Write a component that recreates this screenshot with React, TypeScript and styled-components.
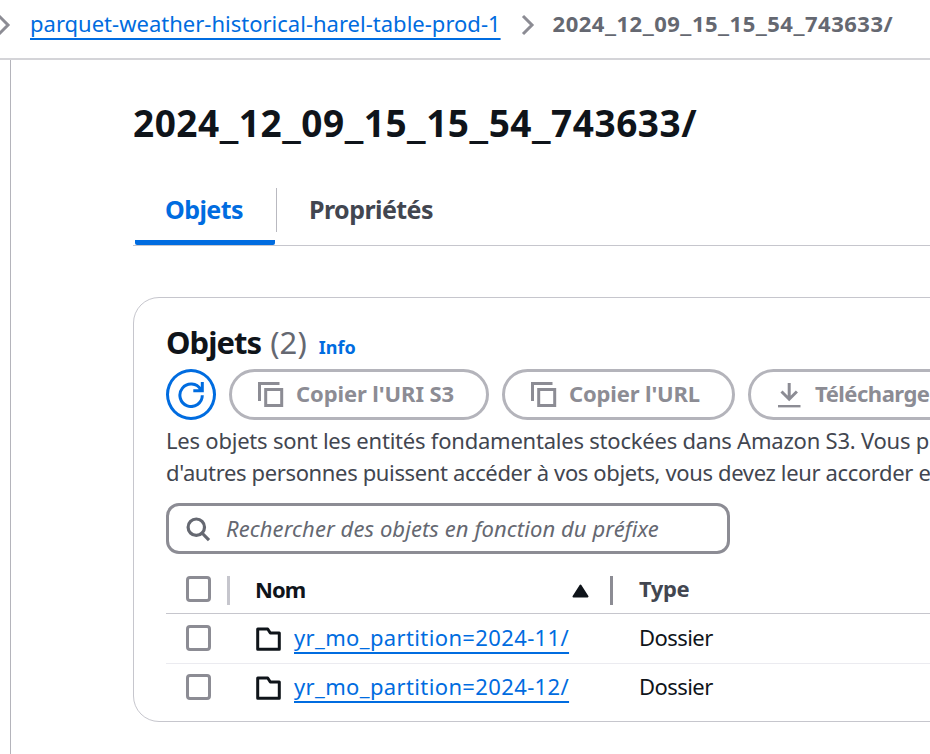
import React from 'react';
import styled, { createGlobalStyle, css } from 'styled-components';

const GlobalStyle = createGlobalStyle`
  *, *::before, *::after { box-sizing: border-box; }
  html, body { margin: 0; height: 100%; overflow: hidden; background: #fff; }
  body {
    font-family: "Noto Sans", "Open Sans", sans-serif;
    font-size: 22px;
    line-height: 32px;
    color: #0f141a;
  }
`;

const Page = styled.div`
  width: 100vw;
  height: 100vh;
  overflow: hidden;
  display: flex;
  flex-direction: column;
  white-space: nowrap;
`;

const Breadcrumbs = styled.nav`
  flex: none;
  height: 60px;
  padding-bottom: 13px;
  border-bottom: 2px solid #d4d4d8;
  display: flex;
  align-items: center;
`;

const Chevron = styled.svg<{ $first?: boolean }>`
  flex: none;
  width: 14px;
  height: 24px;
  margin: ${(p) => (p.$first ? '5px 19px 0 -3px' : '5px 18px 0 20px')};
`;

const Link = styled.a<{ $spacing?: number }>`
  color: #006ce0;
  letter-spacing: ${(p) => p.$spacing ?? 0}px;
  text-decoration: underline;
  text-decoration-thickness: 2px;
  text-underline-offset: 6px;
  text-decoration-skip-ink: none;
`;

const Current = styled.span`
  color: #656871;
  font-weight: 700;
  letter-spacing: 0.5px;
`;

const Underscore = styled.span`
  font-size: 1.22em;
  line-height: 0;
`;

const Shell = styled.main`
  flex: 1;
  min-height: 0;
  margin-left: 10px;
  padding-left: 122px;
  border-left: 1px solid #b4b4bb;
`;

const Title = styled.h1`
  margin: 0;
  padding-top: 38px;
  font-size: 37px;
  line-height: 50px;
  letter-spacing: 0.52px;
`;

const Tabs = styled.div`
  height: 58px;
  margin-top: 40px;
  display: flex;
  align-items: flex-start;
  border-bottom: 1px solid #c6c6cd;
`;

const Tab = styled.div<{ $active?: boolean }>`
  height: 57px;
  padding: 0 32px;
  font-size: 25px;
  line-height: 43px;
  font-weight: 700;
  letter-spacing: -0.56px;
  color: #424650;
  ${(p) =>
    p.$active &&
    css`
      width: 140px;
      padding: 0 30px;
      margin: 0 1px 0 2px;
      color: #006ce0;
      border-bottom: 5px solid #006ce0;
      border-radius: 3px 3px 2px 2px;
    `}
`;

const TabDivider = styled.div`
  width: 1px;
  height: 44px;
  background: #b9b9c0;
`;

const Card = styled.section`
  width: 1200px;
  height: 425px;
  margin-top: 51px;
  padding: 22px 32px 0;
  border: 1px solid #c6c6cd;
  border-radius: 26px;
`;

const CardHeading = styled.header`
  height: 49px;
  display: flex;
  align-items: baseline;
  line-height: 44px;
`;

const Heading = styled.h2`
  margin: 0 9px 0 0;
  font-size: 31px;
  line-height: 44px;
  letter-spacing: -0.95px;
`;

const Counter = styled.span`
  font-size: 31px;
  letter-spacing: 0.1px;
  color: #656871;
`;

const Info = styled.a`
  margin-left: 12px;
  font-size: 18px;
  font-weight: 700;
  color: #006ce0;
`;

const Actions = styled.div`
  display: flex;
  gap: 13px;
  height: 51px;
`;

const Button = styled.button<{ $width: number; $spacing: number }>`
  flex: none;
  width: ${(p) => p.$width}px;
  height: 51px;
  padding: 0 0 4px 26px;
  border: 3px solid #b4b4bb;
  border-radius: 26px;
  background: #fff;
  color: #8c8c94;
  font: 700 22px/32px "Noto Sans", sans-serif;
  letter-spacing: ${(p) => p.$spacing}px;
  display: flex;
  align-items: center;
  gap: 12px;
`;

const RoundButton = styled.button`
  flex: none;
  width: 50px;
  height: 51px;
  padding: 0;
  border: 3px solid #006ce0;
  border-radius: 50%;
  background: #fff;
  display: grid;
  place-items: center;
`;

const Icon = styled.svg`
  flex: none;
  display: block;
  width: 26px;
  height: 26px;
`;

const ButtonIcon = styled(Icon)`
  margin-top: 5px;
`;

const Description = styled.p`
  margin: 4px 0 0;
  color: #424650;
`;

const DescriptionLine = styled.span<{ $spacing: number }>`
  display: block;
  letter-spacing: ${(p) => p.$spacing}px;
`;

const Search = styled.div`
  width: 564px;
  height: 51px;
  margin-top: 15px;
  padding: 0 16px 2px;
  border: 3px solid #8c8c94;
  border-radius: 13px;
  display: flex;
  align-items: center;
  gap: 15px;
`;

const SearchIcon = styled(Icon)`
  margin-top: 3px;
`;

const SearchText = styled.span`
  color: #656871;
  font-style: italic;
  letter-spacing: 0.08px;
`;

const Table = styled.div`
  margin-top: 11px;
`;

const Row = styled.div<{ $height: number; $line?: string }>`
  height: ${(p) => p.$height}px;
  display: grid;
  grid-template-columns: 61px 386px 1fr;
  align-items: center;
  border-bottom: 1px solid ${(p) => p.$line ?? 'transparent'};
`;

const SelectCell = styled.div`
  display: flex;
  align-items: center;
  justify-content: space-between;
  padding-left: 20px;
  width: 64px;
`;

const Checkbox = styled.span<{ $raised?: boolean }>`
  width: 25px;
  height: 26px;
  margin-bottom: ${(p) => (p.$raised ? 1 : 0)}px;
  border: 3px solid #8c8c94;
  border-radius: 4px;
`;

const ColumnDivider = styled.span<{ $color: string }>`
  width: 3px;
  height: 29px;
  margin-top: 3px;
  background: ${(p) => p.$color};
`;

const NameCell = styled.div<{ $header?: boolean }>`
  display: flex;
  align-items: center;
  padding: ${(p) => (p.$header ? '0 0 0 28px' : '0 0 3px 29px')};
`;

const ColumnLabel = styled.span<{ $spacing: number; $muted?: boolean }>`
  display: block;
  margin-bottom: 1px;
  font-weight: 700;
  letter-spacing: ${(p) => p.$spacing}px;
  color: ${(p) => (p.$muted ? '#424650' : '#0f141a')};
`;

const SortIcon = styled.svg`
  width: 17px;
  height: 14px;
  margin: 3px 21px 0 auto;
`;

const FolderIcon = styled(Icon)`
  margin: 4px 12px 0 0;
`;

const TypeCell = styled.div`
  padding: 0 0 3px 26px;
  letter-spacing: -0.55px;
`;

const HeaderTypeCell = styled(TypeCell)`
  padding-bottom: 1px;
`;

const Stamp = () => (
  <>
    {'2024_12_09_15_15_54_743633/'.split('_').map((part, i) => (
      <React.Fragment key={i}>
        {i > 0 && <Underscore>_</Underscore>}
        {part}
      </React.Fragment>
    ))}
  </>
);

const Separator = ({ first }: { first?: boolean }) => (
  <Chevron $first={first} viewBox="0 0 14 24" fill="none" stroke="#8c8c94" strokeWidth="3">
    <path d="M2 3l9 9-9 9" />
  </Chevron>
);

const CopyIcon = () => (
  <ButtonIcon viewBox="0 0 26 26" fill="none" stroke="#8c8c94" strokeWidth="3">
    <path d="M1.5 19V1.5h20M7.7 7.5h16v16h-16z" />
  </ButtonIcon>
);

const rows = ['yr_mo_partition=2024-11/', 'yr_mo_partition=2024-12/'];

export default function App() {
  return (
    <Page>
      <GlobalStyle />
      <Breadcrumbs>
        <Separator first />
        <Link $spacing={0.01}>parquet-weather-historical-harel-table-prod-1</Link>
        <Separator />
        <Current><Stamp /></Current>
      </Breadcrumbs>
      <Shell>
        <Title><Stamp /></Title>
        <Tabs>
          <Tab $active>Objets</Tab>
          <TabDivider />
          <Tab>Propriétés</Tab>
        </Tabs>
        <Card>
          <CardHeading>
            <Heading>Objets</Heading>
            <Counter>(2)</Counter>
            <Info>Info</Info>
          </CardHeading>
          <Actions>
            <RoundButton aria-label="Actualiser">
              <Icon viewBox="0 0 26 26" fill="none" stroke="#006ce0" strokeWidth="3">
                <path d="M24.3 13.3A11.2 11.2 0 1 1 22.7 7.5M24.3 0v8.7h-9" />
              </Icon>
            </RoundButton>
            <Button $width={260} $spacing={-0.1}><CopyIcon />Copier l'URI S3</Button>
            <Button $width={233} $spacing={-0.15}><CopyIcon />Copier l'URL</Button>
            <Button $width={260} $spacing={-0.5}>
              <ButtonIcon viewBox="0 0 26 26" fill="none" stroke="#8c8c94" strokeWidth="3">
                <path d="M12.2 1v16M4.5 9.5l7.7 7.7 7.7-7.7" />
                <path d="M1 24.2h22.5" strokeWidth="2.4" />
              </ButtonIcon>
              Télécharger
            </Button>
          </Actions>
          <Description>
            <DescriptionLine $spacing={-0.22}>
              Les objets sont les entités fondamentales stockées dans Amazon S3. Vous p
            </DescriptionLine>
            <DescriptionLine $spacing={-0.36}>
              d'autres personnes puissent accéder à vos objets, vous devez leur accorder e
            </DescriptionLine>
          </Description>
          <Search>
            <SearchIcon viewBox="0 0 26 26" fill="none" stroke="#656871" strokeWidth="3.2">
              <circle cx="11.3" cy="11.2" r="8.2" />
              <path d="M17 17l7 7.2" />
            </SearchIcon>
            <SearchText>Rechercher des objets en fonction du préfixe</SearchText>
          </Search>
          <Table>
            <Row $height={49} $line="#c6c6cd">
              <SelectCell>
                <Checkbox />
                <ColumnDivider $color="#c6c6cd" />
              </SelectCell>
              <NameCell $header>
                <ColumnLabel $spacing={-1}>Nom</ColumnLabel>
                <SortIcon viewBox="0 0 17 14">
                  <path d="M8.5 1.5L15.5 12.5H1.5z" fill="#0f141a" stroke="#0f141a" strokeWidth="2" strokeLinejoin="round" />
                </SortIcon>
                <ColumnDivider $color="#8c8c94" />
              </NameCell>
              <HeaderTypeCell>
                <ColumnLabel $spacing={-0.4} $muted>Type</ColumnLabel>
              </HeaderTypeCell>
            </Row>
            {rows.map((name, i) => (
              <Row key={name} $height={i === 0 ? 50 : 48} $line={i === 0 ? '#ebebf0' : undefined}>
                <SelectCell><Checkbox $raised /></SelectCell>
                <NameCell>
                  <FolderIcon viewBox="0 0 26 26" fill="none" stroke="#0f141a" strokeWidth="3" strokeLinejoin="round">
                    <path d="M1.7 23.3V3h10l2.6 4h9v16.3z" />
                  </FolderIcon>
                  <Link $spacing={0.37}>{name}</Link>
                </NameCell>
                <TypeCell>Dossier</TypeCell>
              </Row>
            ))}
          </Table>
        </Card>
      </Shell>
    </Page>
  );
}
